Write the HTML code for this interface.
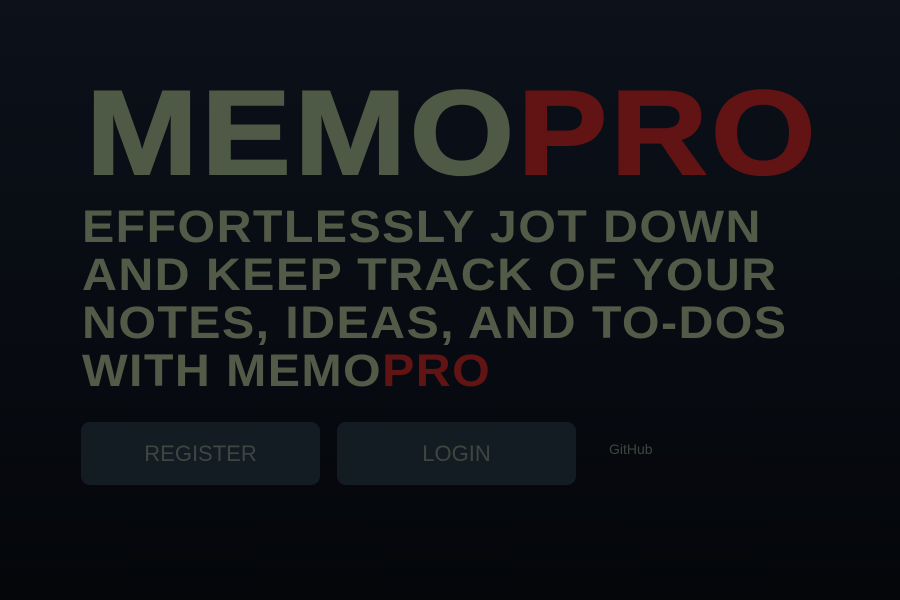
<!DOCTYPE html>
<html><head><style>
html,body{margin:0;width:900px;height:600px;overflow:hidden}
body{background:linear-gradient(#0c111a,#04060a);font-family:"Liberation Sans",sans-serif;position:relative}
.t{position:absolute;left:86px;top:68px;font-size:120px;font-weight:bold;letter-spacing:3px;color:#4e5a45;line-height:130px;white-space:nowrap;transform:scaleX(1.12);transform-origin:left top;-webkit-text-stroke:2px #4e5a45}
.t .r{-webkit-text-stroke:2px #621313}
.r{color:#621313}
.s{position:absolute;left:82px;top:203px;font-size:45px;font-weight:bold;color:#535b48;line-height:48px;letter-spacing:1.3px;white-space:nowrap;transform:scaleX(1.075);transform-origin:left top}
.b{position:absolute;top:422px;width:239px;height:63px;background:#141c23;border-radius:9px;color:#3e463f;font-size:22px;text-align:center;line-height:63px}
.g{position:absolute;left:609px;top:441px;font-size:14px;color:#3e463f}
</style></head><body>
<div class="t">MEMO<span class="r">PRO</span></div>
<div class="s">EFFORTLESSLY JOT DOWN<br>AND KEEP TRACK OF YOUR<br>NOTES, IDEAS, AND TO-DOS<br>WITH MEMO<span class="r">PRO</span></div>
<div class="b" style="left:81px">REGISTER</div>
<div class="b" style="left:337px">LOGIN</div>
<div class="g">GitHub</div>
</body></html>
